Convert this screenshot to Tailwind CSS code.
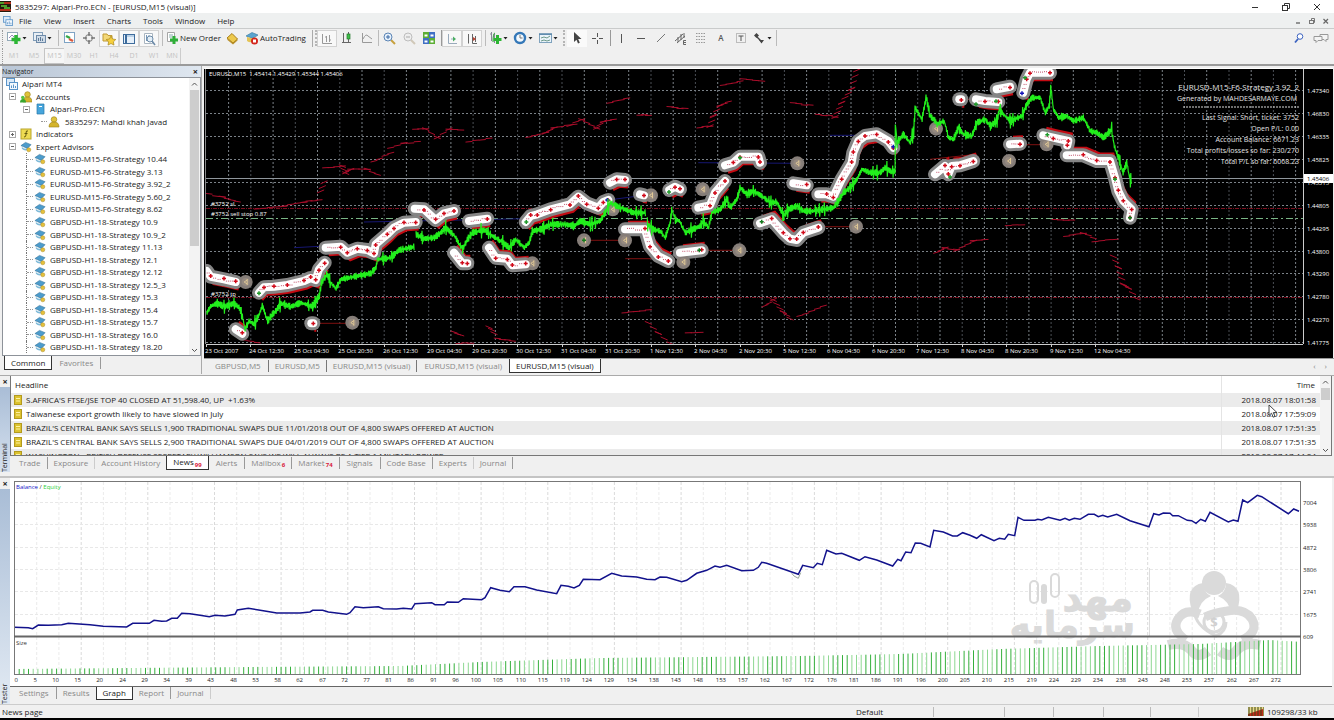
<!DOCTYPE html>
<html lang="en">
  <head>
    <meta charset="UTF-8" />
    <meta name="viewport" content="width=device-width, initial-scale=1.0" />
    <script src="https://cdn.jsdelivr.net/npm/@tailwindcss/browser@4"></script>
    <title>5835297: Alpari-Pro.ECN - [EURUSD,M15 (visual)]</title>
  </head>
  <body class="bg-[#f0f0f0] font-['Open_Sans','Noto_Sans',sans-serif] text-[8px] leading-[12px] text-[#222] overflow-x-hidden">
    <!-- shared icons -->
    <svg class="hidden">
      <symbol id="hat" viewBox="0 0 13 12">
        <path d="M1 4.500 6 1l6 2.500-4 4z" fill="#4d9ccc" stroke="#2f6f96" stroke-width=".6" />
        <path d="M2 6q3 3 6 1l1 2q-4 2-7-1z" fill="#7db9d8" />
        <circle cx="9.500" cy="9" r="2.200" fill="#e5c13c" stroke="#a8841c" stroke-width=".5" />
      </symbol>
      <symbol id="person" viewBox="0 0 12 12">
        <circle cx="6" cy="3.500" r="2.800" fill="#e0c33a" stroke="#9a7f16" stroke-width=".6" />
        <path d="M1 11q0-5 5-5t5 5z" fill="#d4b42c" stroke="#9a7f16" stroke-width=".6" />
      </symbol>
      <symbol id="people" viewBox="0 0 12 12">
        <circle cx="7.500" cy="3.500" r="2.800" fill="#e0c33a" stroke="#9a7f16" stroke-width=".6" />
        <path d="M3 11q0-5 4.500-5t4.500 5z" fill="#d4b42c" stroke="#9a7f16" stroke-width=".6" />
        <circle cx="2.800" cy="6.500" r="1.800" fill="#57c443" />
        <path d="M0 11.500q0-3.500 3-3.500t3 3.500z" fill="#39a62e" />
      </symbol>
      <symbol id="note" viewBox="0 0 8 10">
        <rect x=".5" y=".5" width="7" height="9" fill="#dcc22f" stroke="#b39a1d" />
        <path d="M2 3.500h4M2 6h4" stroke="#fff3a0" />
      </symbol>
      <symbol id="windows" viewBox="0 0 12 12">
        <rect x=".5" y=".5" width="8" height="7" fill="#dbeaf8" stroke="#5b94c8" />
        <rect x="3.500" y="4.500" width="8" height="7" fill="#f4f9fe" stroke="#5b94c8" />
        <path d="M5.500 10V7.500M7.500 10V6.500M9.500 10V8" stroke="#5b94c8" />
      </symbol>
      <symbol id="dd" viewBox="0 0 5 4"><path d="M.5 1h4L2.500 3.500z" fill="#222" /></symbol>
    </svg>

    <header class="flex h-[13px] items-center bg-white">
      <svg class="w-[11px] h-[11px]" viewBox="0 0 11 11"><rect width="11" height="11" fill="#241a0c" /><path d="M0 2h5M1 5h6M4 7h6" stroke="#4e9e2a" stroke-width="2" /><path d="M4 2h7M0 9h11" stroke="#b3301b" stroke-width="2" /></svg>
      <h1 class="ml-1 grow">5835297: Alpari-Pro.ECN - [EURUSD,M15 (visual)]</h1>
      <button aria-label="Minimize" class="w-[31px] grid place-items-center"><svg class="w-2 h-2" viewBox="0 0 8 8"><path d="M1 4.500h6" stroke="#333" /></svg></button>
      <button aria-label="Restore" class="w-[31px] grid place-items-center"><svg class="w-2 h-2" viewBox="0 0 8 8" fill="none" stroke="#333"><rect x=".5" y="2.500" width="5" height="5" /><path d="M2.500 2V.5h5v5H6" /></svg></button>
      <button aria-label="Close" class="w-[31px] grid place-items-center"><svg class="w-2 h-2" viewBox="0 0 8 8"><path d="m1 1 6 6m0-6L1 7" stroke="#333" /></svg></button>
      <span class="w-[2px]"></span>
    </header>

    <nav class="flex h-[15px] items-center gap-3 bg-[#eef0f0] pl-[3px]">
      <svg class="w-[10px] h-[10px] -mr-1.5"><use href="#windows" /></svg>
      <button>File</button><button>View</button><button>Insert</button><button>Charts</button><button>Tools</button><button>Window</button><button>Help</button>
      <span class="ml-auto flex gap-[6px] pr-1 text-[#666]">
        <button aria-label="Minimize chart"><svg class="w-2 h-2" viewBox="0 0 8 8"><path d="M2 6h4" stroke="#555" stroke-width="1.200" /></svg></button>
        <button aria-label="Restore chart"><svg class="w-2 h-2" viewBox="0 0 8 8" fill="none" stroke="#777"><rect x="1.500" y="3.500" width="4" height="3" /><path d="M3.500 3V1.500h3v4H6" /></svg></button>
        <button aria-label="Close chart"><svg class="w-2 h-2" viewBox="0 0 8 8"><path d="m1.500 2 4.500 4.500M6 2 1.500 6.500" stroke="#666" stroke-width="1.200" /></svg></button>
      </span>
    </nav>

    <!-- main toolbar -->
    <div class="flex h-[19px] items-center border-t border-[#c9cbcb] bg-[#f0f0f0]">
      <span class="w-[2px] ml-[2px] mr-px h-4 border-l border-dotted border-[#999]"></span>
      <button aria-label="New chart" class="flex w-[25px] items-center pl-px"><svg class="w-4 h-4" viewBox="0 0 16 16"><rect x="1.500" y="2.500" width="10" height="8" fill="#fff" stroke="#93a9b8" /><path d="M3 8l3-3 2 2" fill="none" stroke="#98b" /><path d="M10 5v9M5.500 9.500h9" stroke="#2db534" stroke-width="3.500" /></svg><svg class="w-[5px] h-1"><use href="#dd" /></svg></button>
      <button aria-label="Profiles" class="flex w-[25px] items-center pl-px"><svg class="w-4 h-4" viewBox="0 0 16 16"><rect x="2.500" y="2.500" width="9" height="8" fill="#e8eef4" stroke="#7f9cb8" /><rect x="5.500" y="5.500" width="9" height="7" fill="#cfdbe7" stroke="#6e8aa8" /><path d="M7.500 11V8M9.500 11V7M11.500 11V8.500" stroke="#5c7896" /></svg><svg class="w-[5px] h-1"><use href="#dd" /></svg></button>
      <span class="w-1 h-4 border-r border-[#bbb]"></span>
      <button aria-label="Market Watch" class="grid w-5 place-items-center"><svg class="w-4 h-4" viewBox="0 0 16 16"><rect x="3.500" y="2.500" width="10" height="10" fill="#fff" stroke="#7ea3c4" /><path d="m5 6 4 2" stroke="#35a94a" stroke-width="2.500" /><path d="m8 9 4 2" stroke="#d95a3d" stroke-width="2.500" /></svg></button>
      <button aria-label="Data Window" class="grid w-5 place-items-center"><svg class="w-4 h-4" viewBox="0 0 16 16" fill="none" stroke="#777"><circle cx="8" cy="8" r="3.500" /><path d="M8 2v4M8 10v4M2 8h4M10 8h4" stroke-width="1.500" /></svg></button>
      <button aria-label="Navigator" class="grid h-[17px] w-5 place-items-center border border-[#d2d2d2] bg-[#f8f8f8]"><svg class="w-4 h-4" viewBox="0 0 16 16"><path d="M2 3h4l1 1.500h4V10H2z" fill="#f3d878" stroke="#c09a35" /><path d="m10 5 1.500 3 3.300.5-2.400 2.300.6 3.300-3-1.600-3 1.600.6-3.300L5.200 8.500 8.500 8z" fill="#f6cf3c" stroke="#a8861e" stroke-width=".7" /></svg></button>
      <button aria-label="Terminal" class="grid h-[17px] w-5 place-items-center border border-[#d2d2d2] bg-[#f8f8f8]"><svg class="w-4 h-4" viewBox="0 0 16 16"><rect x="2.500" y="3.500" width="11" height="9" fill="#e6f0fa" stroke="#3e6c9c" /><path d="M5 4v8" stroke="#3e6c9c" stroke-width="2" /><path d="M6 5h7" stroke="#8fb1d2" /></svg></button>
      <button aria-label="Strategy Tester" class="grid h-[17px] w-5 place-items-center border border-[#d2d2d2] bg-[#f8f8f8]"><svg class="w-4 h-4" viewBox="0 0 16 16"><path d="M3.500 2.500h8v10h-8z" fill="#fff" stroke="#a9b5c0" /><path d="M5.500 4v6M8 4v4" stroke="#79b" /><circle cx="9" cy="8" r="3" fill="#e3eef7" stroke="#6d8ba8" /><path d="m11 10 3 4" stroke="#6d8ba8" stroke-width="1.500" /></svg></button>
      <span class="w-1 h-4 border-r border-[#bbb]"></span>
      <button class="flex w-[59px] items-center gap-px whitespace-nowrap pl-[2px]"><svg class="w-[14px] h-4 shrink-0" viewBox="0 0 14 16"><path d="M2.500 2.500h7v9h-7z" fill="#fff" stroke="#a5a5a5" /><path d="M4 5h4M4 7h4" stroke="#8aa" /><path d="M9 6v8M5 10h8" stroke="#2fae38" stroke-width="3" /></svg>New Order</button>
      <button aria-label="MetaEditor" class="grid w-5 place-items-center"><svg class="w-4 h-4" viewBox="0 0 16 16"><path d="m3 8 5-4.500L13.500 9 9 13z" fill="#edc94c" stroke="#a87f1b" /><path d="m3 8 .5 2L9 14.500l4.500-4V9L9 13z" fill="#b98f28" /></svg></button>
      <button class="flex w-[67px] items-center gap-px whitespace-nowrap pl-[3px]"><svg class="w-[14px] h-4 shrink-0" viewBox="0 0 14 16"><path d="m1 6 6-3.500L13 5 8 8.500z" fill="#5aa4cf" stroke="#33769e" stroke-width=".6" /><path d="M2 7v4q4 3 8-1V7L8 8.500z" fill="#e4c456" /><circle cx="9.500" cy="11" r="3.500" fill="#d3261d" /><rect x="8" y="9.500" width="3" height="3" fill="#fff" /></svg>AutoTrading</button>
      <span class="w-1 h-[17px] border-r border-[#aaa]"></span>
      <span class="w-1 h-4 border-r-2 border-dotted border-[#b5b5b5]"></span>
      <button aria-label="Bar Chart" class="grid h-[17px] w-5 place-items-center border border-[#d2d2d2] bg-[#f8f8f8]"><svg class="w-4 h-4" viewBox="0 0 16 16"><path d="M3.500 3v9.500H13M7.500 5v6M10.500 4v7M6 6h1.500M10.500 9H12" fill="none" stroke="#999" /></svg></button>
      <button aria-label="Candlesticks" class="grid w-5 place-items-center"><svg class="w-4 h-4" viewBox="0 0 16 16"><path d="M4.500 3v10M9.500 2v10M3 12.500h9" stroke="#666" /><rect x="8" y="4" width="3" height="5" fill="#3fc04a" stroke="#247a2c" stroke-width=".7" /></svg></button>
      <button aria-label="Line Chart" class="grid w-5 place-items-center"><svg class="w-4 h-4" viewBox="0 0 16 16"><path d="M3.500 3v9.500H13M4 9q3-6 5-3l4 3" fill="none" stroke="#999" /></svg></button>
      <span class="w-[2px] h-4 border-r border-[#bbb]"></span>
      <button aria-label="Zoom In" class="grid w-5 place-items-center"><svg class="w-4 h-4" viewBox="0 0 16 16"><path d="m10 10 4 4" stroke="#c6a03e" stroke-width="2" /><circle cx="7" cy="7" r="4" fill="#e5f0fb" stroke="#5b84b4" /><path d="M7 5v4M5 7h4" stroke="#3b69a4" /></svg></button>
      <button aria-label="Zoom Out" class="grid w-5 place-items-center"><svg class="w-4 h-4" viewBox="0 0 16 16"><path d="m10 10 4 4" stroke="#d0c8b8" stroke-width="2" /><circle cx="7" cy="7" r="4" fill="#eee" stroke="#bdbdbd" /><path d="M5 7h4" stroke="#aaa" /></svg></button>
      <button aria-label="Tile Windows" class="grid w-5 place-items-center"><svg class="w-4 h-4" viewBox="0 0 16 16"><rect x="2" y="2" width="6" height="6" fill="#5cae35" /><rect x="8" y="2" width="6" height="6" fill="#3f6fc4" /><rect x="2" y="8" width="6" height="6" fill="#3f6fc4" /><rect x="8" y="8" width="6" height="6" fill="#5cae35" /><path d="M3.500 5.500h3M9.500 5.500h3M3.500 11.500h3M9.500 11.500h3" stroke="#fff" stroke-width="2" /></svg></button>
      <span class="w-[3px] h-4 border-r border-[#999]"></span>
      <button aria-label="Auto Scroll" class="grid h-[17px] w-5 place-items-center border border-[#d2d2d2] bg-[#f8f8f8]"><svg class="w-4 h-4" viewBox="0 0 16 16"><path d="M4.500 3v9.500H13M7 8h3" fill="none" stroke="#9ab" /><path d="m9 5.500 3 2.500-3 2.500z" fill="#4bae63" /></svg></button>
      <button aria-label="Chart Shift" class="grid h-[17px] w-5 place-items-center border border-[#d2d2d2] bg-[#f8f8f8]"><svg class="w-4 h-4" viewBox="0 0 16 16"><path d="M4.500 3v9.500M8.500 3v9.500H13M11.500 5v6" fill="none" stroke="#666" /><path d="m9 6 3 2-3 2z" fill="#b43" /></svg></button>
      <span class="w-1 h-4 border-r border-[#bbb]"></span>
      <button aria-label="Indicators" class="flex w-[25px] items-center pl-px"><svg class="w-4 h-4" viewBox="0 0 16 16"><path d="M4.500 2v9M7.500 4v9M3 4h1.500" stroke="#889" /><path d="M8 3q-2 0-2 9" fill="none" stroke="#2b9b36" /><path d="M10.500 5v9M6.500 9.500h8" stroke="#2db534" stroke-width="3" /></svg><svg class="w-[5px] h-1"><use href="#dd" /></svg></button>
      <button aria-label="Periods" class="flex w-[25px] items-center pl-px"><svg class="w-4 h-4" viewBox="0 0 16 16"><circle cx="8" cy="8" r="5" fill="#f4f9fd" stroke="#3478b8" stroke-width="2.400" /><path d="M8 5v3h2.500" fill="none" stroke="#777" /></svg><svg class="w-[5px] h-1"><use href="#dd" /></svg></button>
      <button aria-label="Templates" class="flex w-[25px] items-center pl-px"><svg class="w-4 h-4" viewBox="0 0 16 16"><rect x="2.500" y="3.500" width="12" height="9" fill="#e9f3fa" stroke="#7fa2bd" /><path d="M2 4.500h13" stroke="#5f8cae" /><path d="m4 8 3-1 3 1 3-2M4 11l3-1 3 1 3-1" fill="none" stroke="#6e9a8a" /></svg><svg class="w-[5px] h-1"><use href="#dd" /></svg></button>
      <span class="w-1 mr-[2px] h-4 border-r-2 border-dotted border-[#b5b5b5]"></span>
      <button aria-label="Cursor" class="grid h-[17px] w-5 place-items-center bg-[#fafafa]"><svg class="w-4 h-4" viewBox="0 0 16 16"><path d="M5 2v10l2.500-2.200L9 13.500l1.800-.8L9.200 9H12.500z" fill="#444" /></svg></button>
      <button aria-label="Crosshair" class="grid w-5 place-items-center"><svg class="w-4 h-4" viewBox="0 0 16 16"><path d="M8.500 3v4M8.500 10v4M3 8.500h4M10 8.500h4" stroke="#555" /></svg></button>
      <span class="w-1 h-4 border-r border-[#999]"></span>
      <button aria-label="Vertical Line" class="grid w-5 place-items-center"><svg class="w-4 h-4" viewBox="0 0 16 16"><path d="M8.500 4v9" stroke="#555" /></svg></button>
      <button aria-label="Horizontal Line" class="grid w-5 place-items-center"><svg class="w-4 h-4" viewBox="0 0 16 16"><path d="M4 8.500h8" stroke="#555" /></svg></button>
      <button aria-label="Trendline" class="grid w-5 place-items-center"><svg class="w-4 h-4" viewBox="0 0 16 16"><path d="m4 12 8-8" stroke="#777" /></svg></button>
      <button aria-label="Equidistant Channel" class="grid w-5 place-items-center"><svg class="w-4 h-4" viewBox="0 0 16 16"><path d="m2 11 8-7M4 13l8-7M5 7v5M8 4v6M11 3v5M10.500 14.500v-4H13M10.500 12.500H13M10.500 14.500H13" fill="none" stroke="#666" /></svg></button>
      <button aria-label="Fibonacci" class="grid w-5 place-items-center"><svg class="w-4 h-4" viewBox="0 0 16 16"><path d="M3 3.500h9M3 6.500h9M3 9.500h9M3 12.500h9" stroke="#999" stroke-dasharray="1.500 1" /></svg></button>
      <button aria-label="Text" class="w-5 text-center text-[#555] font-semibold">A</button>
      <button aria-label="Text Label" class="grid w-5 place-items-center"><svg class="w-4 h-4" viewBox="0 0 16 16"><rect x="3.500" y="3.500" width="9" height="9" fill="none" stroke="#888" stroke-dasharray="1 1" /><path d="M5.500 6h5M8 6v5" stroke="#555" /></svg></button>
      <button aria-label="Arrows" class="flex w-[25px] items-center"><svg class="w-4 h-4" viewBox="0 0 16 16"><path d="M3 5.500 5.500 3 8 5.500 5.500 8zM8 10h5l-2.500 3.500z" fill="#444" /><path d="m6 7 4 4" stroke="#444" stroke-width="1.500" /></svg><svg class="w-[5px] h-1"><use href="#dd" /></svg></button>
      <span class="w-px h-4 bg-[#bbb]"></span>
      <button aria-label="Search" class="ml-auto mr-[8px]"><svg class="w-3 h-3" viewBox="0 0 12 12"><path d="M5 7 2 10.500" stroke="#3b62c0" stroke-width="1.800" /><circle cx="7" cy="4.500" r="2.800" fill="#fff" stroke="#3b62c0" /></svg></button>
      <button aria-label="Chat" class="mr-[5px]"><svg class="w-4 h-3" viewBox="0 0 16 12" fill="#f4f4f4" stroke="#999"><path d="M7 2.500h8v5h-2v2l-2-2H7z" /><path d="M1 4.500h8v4H5l-2 2v-2H1z" /></svg></button>
    </div>

    <!-- timeframes -->
    <div class="flex h-[19px] items-center border-b-2 border-[#9a9a9a] text-[7px] text-[#c2c2c2] [text-shadow:1px_1px_#fff]">
      <span class="w-[2px] ml-[2px] h-4 border-l border-dotted border-[#999]"></span>
      <button class="w-5">M1</button><button class="w-5">M5</button><button class="w-5 h-4 border border-r-0 border-[#c4c4c4] bg-[#f6f6f6]">M15</button><button class="w-5">M30</button><button class="w-5">H1</button><button class="w-5">H4</button><button class="w-5">D1</button><button class="w-5">W1</button><button class="w-4">MN</button>
      <span class="w-px h-4 bg-[#ccc]"></span>
    </div>

    <main class="flex gap-[2px]">
      <!-- navigator -->
      <aside class="flex w-[202px] shrink-0 flex-col border-r border-[#aaa] pl-[2px]">
        <div class="flex h-[11px] items-center justify-between bg-linear-to-r from-[#b9c6d6] to-[#dfe7f0] pr-[3px] text-[7px]">
          <h2>Navigator</h2><button aria-label="Close Navigator" class="text-[9px] font-bold">×</button>
        </div>
        <div class="flex h-0 grow overflow-hidden border border-[#8d9299] bg-white">
          <ul id="tree" class="relative grid h-[288px] grow auto-rows-fr whitespace-nowrap"></ul>
          <div class="flex w-[11px] flex-col items-center bg-[#f3f3f3]">
            <svg class="my-[2px] w-[7px] h-2" viewBox="0 0 7 8"><path d="m1 5.500 2.500-2.500L6 5.500" fill="none" stroke="#555" /></svg>
            <div class="h-[156px] w-[9px] bg-[#cdcdcd]"></div>
            <svg class="mt-auto mb-px w-[7px] h-2" viewBox="0 0 7 8"><path d="m1 3 2.500 2.500L6 3" fill="none" stroke="#555" /></svg>
          </div>
        </div>
        <div class="flex h-[18px] items-start pl-[2px] text-[#888]">
          <button class="h-[14px] border border-t-0 border-[#333] bg-white px-[6px] text-[#222]">Common</button>
          <button class="mt-px px-[7px] h-3 border-r border-[#999]">Favorites</button>
        </div>
      </aside>

      <section class="grow">
        <svg id="price" class="block h-auto w-full" viewBox="204 66 1130 292" font-family="Open Sans, sans-serif"></svg>
        <div class="flex h-4 items-start border-t border-[#999] pt-px text-[#888]">
          <button class="ml-[4px] h-3 border-r border-[#777] px-[7px]">GBPUSD,M5</button>
          <button class="h-3 border-r border-[#777] px-[6px]">EURUSD,M5</button>
          <button class="h-3 border-r border-[#777] px-[6px]">EURUSD,M15 (visual)</button>
          <button class="h-3 px-[7px]">EURUSD,M15 (visual)</button>
          <button class="-mt-px h-[14px] border border-t-0 border-[#333] bg-white px-[6px] text-[#222]">EURUSD,M15 (visual)</button>
          <button aria-label="Scroll tabs left" class="ml-auto mr-[9px]">‹</button><button aria-label="Scroll tabs right" class="mr-[7px]">›</button>
        </div>
      </section>
    </main>

    <!-- terminal -->
    <section class="relative mt-px flex h-[97px] border-t border-[#aaa]">
      <div class="flex w-[10px] flex-col items-center bg-[#f0f0f0]">
        <button aria-label="Close Terminal" class="h-[11px] text-[9px] leading-[8px] font-bold">×</button>
        <div class="flex grow items-center bg-linear-to-b from-[#d5e0ee] to-[#a9bdd6] [writing-mode:vertical-rl] rotate-180 w-[10px] text-[7px]"><h2>Terminal</h2></div>
      </div>
      <div class="flex min-w-0 grow flex-col pr-[2px]">
        <div class="flex h-[80px] overflow-hidden border border-t-0 border-[#777] bg-white">
          <table class="grow border-collapse self-start">
            <thead><tr class="h-[17px]"><th class="pl-1 text-left font-normal">Headline</th><th class="w-[99px] border-l border-[#e4e4e4] pr-[5px] text-right font-normal">Time</th></tr></thead>
            <tbody id="news"></tbody>
          </table>
          <div class="flex w-[11px] flex-col items-center bg-[#f3f3f3]">
            <svg class="my-[2px] w-[7px] h-2" viewBox="0 0 7 8"><path d="m1 5.500 2.500-2.500L6 5.500" fill="none" stroke="#555" /></svg>
            <div class="h-[12px] w-[9px] bg-[#cdcdcd]"></div>
            <svg class="mt-auto mb-px w-[7px] h-2" viewBox="0 0 7 8"><path d="m1 3 2.500 2.500L6 3" fill="none" stroke="#555" /></svg>
          </div>
        </div>
        <div class="flex h-[16px] items-start pl-[3px] text-[#888]">
          <button class="mt-px h-3 border-r border-[#999] px-[6px]">Trade</button>
          <button class="mt-px h-3 border-r border-[#ccc] px-[6px]">Exposure</button>
          <button class="mt-px h-3 px-[6px]">Account History</button>
          <button class="flex h-[14px] gap-px border border-t-0 border-[#333] bg-white px-[6px] text-[#222]">News<span class="mt-[3px] text-[6px] font-bold text-[#d8203c]">99</span></button>
          <button class="mt-px h-3 border-r border-[#999] px-[7px]">Alerts</button>
          <button class="mt-px flex h-3 gap-px border-r border-[#999] px-[6px]">Mailbox<span class="mt-[2px] text-[6px] font-bold text-[#d8203c]">6</span></button>
          <button class="mt-px flex h-3 gap-px border-r border-[#999] px-[6px]">Market<span class="mt-[2px] text-[6px] font-bold text-[#d8203c]">74</span></button>
          <button class="mt-px h-3 border-r border-[#999] px-[7px]">Signals</button>
          <button class="mt-px h-3 border-r border-[#999] px-[6px]">Code Base</button>
          <button class="mt-px h-3 border-r border-[#ccc] px-[6px]">Experts</button>
          <button class="mt-px h-3 border-r border-[#999] px-[6px]">Journal</button>
        </div>
      </div>
      <!-- mouse pointer -->
      <svg class="absolute right-[56px] top-[28px] w-[10px] h-[14px]" viewBox="0 0 10 14"><path d="M1 1v10.500l2.500-2.300 1.700 4 1.800-.8-1.700-3.800H9z" fill="#fff" stroke="#333" stroke-width=".9" /></svg>
    </section>

    <!-- tester -->
    <section class="mt-1 flex border-t-2 border-[#c4c4c4]">
      <div class="flex w-[10px] flex-col items-center">
        <button aria-label="Close Tester" class="h-[11px] text-[9px] leading-[8px] font-bold">×</button>
        <div class="flex grow items-center bg-linear-to-b from-[#e2eaf3] to-[#a9bdd6] [writing-mode:vertical-rl] rotate-180 w-[10px] text-[7px]"><h2 class="pb-1">Tester</h2></div>
      </div>
      <div class="grow pr-[2px]">
        <svg id="equity" class="block h-auto w-full border-b border-[#666] bg-white" viewBox="10 478 1322 208" font-family="Open Sans, sans-serif"></svg>
        <div class="flex h-[17px] items-start pl-[2px] text-[#888]">
          <button class="h-3 border-r border-[#999] px-[7px]">Settings</button>
          <button class="h-3 px-[6px]">Results</button>
          <button class="h-[13px] border border-t-0 border-[#333] bg-white px-[6px] text-[#222]">Graph</button>
          <button class="h-3 border-r border-[#999] px-[6px]">Report</button>
          <button class="h-3 border-r border-[#ccc] px-[6px]">Journal</button>
        </div>
      </div>
    </section>

    <footer class="flex h-[17px] items-center border-t border-b-3 border-t-[#ccc] border-b-black pl-[2px]">
      <span class="grow">News page</span>
      <span class="w-[77px]">Default</span>
      <span class="h-[10px] w-[71px] border-l border-[#bbb]"></span>
      <span class="h-[10px] w-[49px] border-l border-[#bbb]"></span>
      <span class="h-[10px] w-[50px] border-l border-[#bbb]"></span>
      <span class="h-[10px] w-[47px] border-l border-[#bbb]"></span>
      <span class="h-[10px] w-[48px] border-l border-[#bbb]"></span>
      <span class="h-[10px] w-[50px] border-l border-[#ccc]"></span>
      <svg class="w-4 h-[9px]" viewBox="0 0 16 9"><rect width="16" height="9" fill="#e8d98a" /><path d="M0 9V7l15-5v7z" fill="#c22a1a" /><path d="M1 0v9M4 0v9M7 0v9M10 0v9M13 0v9M16 0v9" stroke="#3d4416" /></svg>
      <span class="ml-[3px] w-[67px]">109298/33 kb</span>
    </footer>

    <script>
      // navigator tree
      const eas = ["EURUSD-M15-F6-Strategy 10.44", "EURUSD-M15-F6-Strategy 3.13", "EURUSD-M15-F6-Strategy 3.92_2", "EURUSD-M15-F6-Strategy 5.60_2", "EURUSD-M15-F6-Strategy 8.62"]
        .concat(["10.9", "10.9_2", "11.13", "12.1", "12.12", "12.5_3", "15.3", "15.4", "15.7", "16.0", "18.20"].map((n) => "GBPUSD-H1-18-Strategy " + n));
      const box = (plus) => `<svg class="w-[7px] h-[7px] mr-1 shrink-0" viewBox="0 0 7 7"><rect x=".5" y=".5" width="6" height="6" fill="#fff" stroke="#aaa"/><path d="M2 3.500h3${plus ? "M3.500 2v3" : ""}" stroke="#666"/></svg>`;
      const use = (id) => `<svg class="w-3 h-3 mr-1 shrink-0"><use href="#${id}"/></svg>`;
      const book = `<svg class="w-3 h-3 mr-1 shrink-0" viewBox="0 0 12 12"><path d="M3 1h7v10H3z" fill="#46a5dc" stroke="#2a79ab" stroke-width=".7"/><path d="M5 3.500h3" stroke="#fff"/></svg>`;
      const fx = `<svg class="w-3 h-3 mr-1 shrink-0" viewBox="0 0 12 12"><rect x="1" y="1" width="10" height="10" fill="#eedb52" stroke="#b9a52c"/><path d="M8 3q-2-1-2 2v2q0 2-2 2M4.500 5.500h3" fill="none" stroke="#665b10"/></svg>`;
      const dash = `<span class="w-[6px] mr-px border-t border-dotted border-[#999]"></span>`;
      document.getElementById("tree").innerHTML =
        `<li class="flex items-center pl-[3px]">${use("windows")}Alpari MT4</li>` +
        `<li class="flex items-center pl-[6px]">${box()}${use("people")}Accounts</li>` +
        `<li class="flex items-center pl-[20px]">${box()}${book}Alpari-Pro.ECN</li>` +
        `<li class="flex items-center pl-[38px]">${dash}${use("person")}<span class="ml-px">5835297: Mahdi khah Javad</span></li>` +
        `<li class="flex items-center pl-[6px]">${box(1)}${fx}Indicators</li>` +
        `<li class="flex items-center pl-[6px]">${box()}${use("hat")}Expert Advisors</li>` +
        eas.map((t) => `<li class="ml-[23px] flex items-center border-l border-dotted border-[#777]">${dash}${use("hat")}${t}</li>`).join("") +
        `<li class="flex items-center pl-[31px]">${use("hat")}</li>`;

      // news
      const news = [
        ["S.AFRICA'S FTSE/JSE TOP 40 CLOSED AT 51,598.40, UP&nbsp; +1.63%", "18:01:58"],
        ["Taiwanese export growth likely to have slowed in July", "17:59:09"],
        ["BRAZIL'S CENTRAL BANK SAYS SELLS 1,900 TRADITIONAL SWAPS DUE 11/01/2018 OUT OF 4,800 SWAPS OFFERED AT AUCTION", "17:51:35"],
        ["BRAZIL'S CENTRAL BANK SAYS SELLS 2,900 TRADITIONAL SWAPS DUE 04/01/2019 OUT OF 4,800 SWAPS OFFERED AT AUCTION", "17:51:35"],
        ["WASHINGTON - BRITISH DEFENSE SECRETARY WILLIAMSON SAYS WE WILL ALWAYS BE A TIER 1 MILITARY POWER", "17:44:04"],
      ];
      document.getElementById("news").innerHTML = news
        .map(([t, h]) => `<tr class="h-[14px] odd:bg-[#ebebeb]"><td class="pl-[3px]"><span class="flex items-center gap-1"><svg class="w-2 h-[10px]"><use href="#note"/></svg>${t}</span></td><td class="border-l border-[#e4e4e4] pr-1 text-right">2018.08.07 ${h}</td></tr>`)
        .join("");

      // points are kept in thirds of a pixel, relative to x0,y0
      const P = (x0, y0, s) => s.split(" ").map((p) => p.split(",").map(Number)).map(([x, y]) => [x0 + x / 3, y0 + y / 3]);
      const D = (a) => "M" + a.map((p) => p[0].toFixed(1) + " " + p[1].toFixed(1)).join("L");
      let seed = 7;
      const rnd = () => (seed = (seed * 16807) % 2147483647) / 2147483647;
      const line = (x1, y1, x2, y2, st, extra = "") => `<path d="M${x1} ${y1}L${x2} ${y2}" stroke="${st}" ${extra}/>`;
      const text = (x, y, t, size, fill, extra = "") => `<text x="${x}" y="${y}" font-size="${size}" fill="${fill}" ${extra}>${t}</text>`;

      // price chart
      const A = 204, B = 570, C = 930;
      let s = `<clipPath id="plot"><rect x="206" y="69" width="1097" height="275"/></clipPath><rect x="204" y="66" width="1130" height="292" fill="#f0f0f0"/><rect x="204" y="69" width="1129" height="289" fill="#000"/>`;
      for (let i = 0; i < 49; i++) s += line((228.6 + i * 22.23).toFixed(1), 70, (228.6 + i * 22.23).toFixed(1), 344, i % 2 ? "#4a4f55" : "#7b8288", 'stroke-dasharray="2 2"');
      const prices = ["1.47340", "1.46830", "1.46335", "1.45825", "1.45315", "1.44805", "1.44295", "1.43800", "1.43290", "1.42780", "1.42270", "1.41775"];
      prices.forEach((p, i) => {
        const y = Math.round(90 + i * 22.93) + 0.5;
        s += line(206, y, 1306, y, "#7b8288", 'stroke-dasharray="2 2"') + text(1307, y + 2, p, 6, "#fff");
      });
      s += line(206, 208.5, 1303, 208.5, "#7c1020", 'stroke-dasharray="4 1 1 1"') + line(206, 297.5, 1303, 297.5, "#7c1020", 'stroke-dasharray="4 1 1 1"');
      s += line(206, 178.5, 1303, 178.5, "#8f969c") + line(206, 218.5, 1303, 218.5, "#79b585", 'stroke-dasharray="7 3 2 3"');
      s += line(206, 344.5, 1303, 344.5, "#ccc") + line(1303.5, 69, 1303.5, 344, "#ccc") + line(205.5, 69, 205.5, 344, "#888") + line(205, 68.5, 1333, 68.5, "#fff");
      ["23 Oct 2007", "24 Oct 12:30", "25 Oct 04:30", "25 Oct 20:30", "26 Oct 12:30", "29 Oct 04:30", "29 Oct 20:30", "30 Oct 12:30", "31 Oct 04:30", "31 Oct 20:30", "1 Nov 12:30", "2 Nov 04:30", "2 Nov 20:30", "5 Nov 12:30", "6 Nov 04:30", "6 Nov 20:30", "7 Nov 12:30", "8 Nov 04:30", "8 Nov 20:30", "9 Nov 12:30", "12 Nov 04:30"]
        .forEach((t, i) => (s += text(Math.round(205 + i * 44.46), 353, t, 6, "#fff") + line(206.5 + Math.round(i * 44.46), 344, 206.5 + Math.round(i * 44.46), 347, "#ccc")));

      s += `<g clip-path="url(#plot)">`;
      // stop and target levels
      const red = [
        [A, "15,385 55,393 100,407"], [A, "160,428 240,420 300,408 345,402"], [A, "350,375 360,350"], [A, "365,305 415,300 425,320 440,310 490,310 520,325"], [A, "510,285 560,262"],
        [A, "560,245 600,232 640,228"], [A, "635,190 665,188 700,215 735,190 770,192"], [A, "795,227 855,217"], [A, "975,212 1025,200 1050,185 1110,175"], [A, "120,822 160,830"], [A, "750,797 770,808"], [A, "765,832 800,832"], [A, "855,785 870,800"], [A, "880,818 925,825"],
        [B, "0,178 35,160 80,185 100,168 130,162"], [B, "120,110 170,97"], [B, "210,147 235,147"], [B, "300,123 345,128"], [B, "390,185 420,180 430,150 450,118 475,108"], [B, "460,58 510,47"], [B, "520,38 575,45"], [B, "670,112 720,118"], [B, "745,145 795,152 815,110 845,68 860,12"],
        [B, "165,740 235,732"], [B, "235,770 265,802 300,830"], [B, "355,800 390,798"], [B, "585,720 610,702 640,738 660,758"], [B, "690,750 760,720"],
        [C, "235,478 275,476"], [C, "375,462 425,463"], [C, "410,510 460,502 490,515"], [C, "20,558 45,545 80,552 130,525 165,522"], [C, "495,528 555,520"], [C, "550,570 565,605 580,655 595,665 620,698"],
      ];
      red.forEach(([o, p]) => {
        const a = P(o, 66, p);
        for (let i = 1; i < a.length; i++) {
          const dx = a[i][0] - a[i - 1][0], dy = a[i][1] - a[i - 1][1], n = Math.max(2, Math.round(Math.hypot(dx, dy) / 6)), t = Math.max(-1.5, Math.min(1.5, dy / (dx || 1) * 2));
          for (let k = 0; k <= n; k++) {
            const x = a[i - 1][0] + (dx * k) / n, y = a[i - 1][1] + (dy * k) / n + rnd() - 0.5;
            s += line((x - 3.5).toFixed(1), (y - t).toFixed(1), (x + 3.5).toFixed(1), (y + t).toFixed(1), "#a80d2a");
          }
        }
      });
      [[A, "325,772 445,772"], [B, "42,523 165,523"], [B, "395,553 508,553"], [B, "745,482 858,482"], [C, "90,100 140,100"], [C, "270,236 330,236"], [B, "166,578 290,578"], [C, "0,280 140,265"]].forEach(([o, p]) => (s += `<path d="${D(P(o, 66, p))}" stroke="#7e1010"/>`));
      [[A, "270,545 365,540"], [A, "480,468 960,458"], [B, "115,402 222,388"], [B, "385,290 682,292"], [B, "780,208 880,208"]].forEach(([o, p]) => (s += `<path d="${D(P(o, 66, p))}" stroke="#161672" fill="none"/>`));

      // trade bands
      const bands = [
        [A, "8,615 20,632 60,640 95,648"], [A, "165,680 180,664 210,662 250,657 300,645 320,636 335,642 345,610 362,590"], [A, "365,545 410,542 430,560 460,548 490,552 510,562 515,535 550,505 570,485 600,470 635,468"],
        [A, "632,428 660,430 695,462 720,442 750,435"], [A, "795,465 850,458"], [A, "750,560 775,592 790,592"], [A, "855,545 875,575 910,578 925,598 965,595"],
        [A, "965,468 980,450 1000,445 1040,430 1098,415 1123,392 1148,412 1183,425 1198,408 1213,402"], [A, "95,790 115,803"], [A, "322,772 328,772"],
        [B, "120,350 140,340 165,342"], [B, "210,385 222,388"], [B, "298,372 315,362 330,370"], [B, "385,425 420,418 435,380 465,345"], [B, "465,298 490,290 510,272 565,272 570,290"],
        [B, "670,352 710,358"], [B, "745,385 770,385 790,392 815,340 845,290 850,260 865,225 885,210 920,205 955,225 970,245"], [B, "570,472 605,460 640,500 660,518 680,522 700,500 745,485"],
        [B, "165,490 225,490 240,540 265,570 295,585"], [B, "330,560 395,553"],
        [C, "15,325 45,300 55,325 65,300 90,298 130,285"], [C, "88,100 94,100"], [C, "138,100 165,105 205,108"], [C, "200,70 240,62"], [C, "280,80 290,40 300,20 360,20"],
        [C, "340,208 370,215 415,225 412,238"], [C, "240,235 270,233"], [C, "410,268 460,268 500,285 540,285 555,335 565,375 580,405 605,430 600,455"],
      ];
      // red trailing line hugging each band
      bands.forEach(([o, p]) => {
        const a = P(o, 66, p), up = /^(750,560|855,545|165,490|330,560|570,472|15,325|340,208|410,268|240,235|95,790)/.test(p);
        s += `<path d="${D(a.map(([x, y]) => [x + 3, y + (up ? -7 : 7)]))}" fill="none" stroke="#c40a12" stroke-width="3"/>`;
      });
      const dot = [[A, "125,648 985,592 445,770"], [B, "128,430 243,388 398,370 682,292 858,482 42,523 165,523 340,588 508,553 1098,188"], [C, "350,235 237,285"]];
      bands.forEach(([o, p]) => (s += `<path d="${D(P(o, 66, p))}" fill="none" stroke="#858585" stroke-width="14" stroke-linecap="round" stroke-linejoin="round"/>`));
      dot.forEach(([o, p]) => P(o, 66, p).forEach(([x, y]) => {
        s += `<circle cx="${x}" cy="${y}" r="7" fill="#857d78"/><circle cx="${x}" cy="${y}" r="4" fill="#968a80"/><path d="M${x + 1.5} ${y - 3}v6M${x + 1.5} ${y - 2}l-3 2 3 2" fill="none" stroke="#e0c896"/>`;
      }));
      bands.forEach(([o, p]) => {
        const a = P(o, 66, p);
        s += `<path d="${D(a)}" fill="none" stroke="#fff" stroke-width="8" stroke-linecap="round" stroke-linejoin="round"/>`;
        for (let i = 1; i < a.length; i++) {
          const n = Math.max(1, Math.round(Math.hypot(a[i][0] - a[i - 1][0], a[i][1] - a[i - 1][1]) / 4));
          for (let k = 1; k <= n; k++) {
            const x = (a[i - 1][0] + ((a[i][0] - a[i - 1][0]) * k) / n).toFixed(1), y = (a[i - 1][1] + ((a[i][1] - a[i - 1][1]) * k) / n + rnd() * 2 - 1).toFixed(1);
            s += k == n ? `<path d="M${x - 2} ${y}h4m-2-2v4" stroke="#d00a1a" stroke-width="1.500"/>` : `<path d="M${x - 2} ${y}h4" stroke="#c2506a" stroke-dasharray="1 1"/>`;
          }
        }
      });
      // open buy / close marks
      [[A, 165, 682, "#1f9a2a"], [A, 967, 468, "#1f9a2a"], [B, 112, 402, "#1414b8"], [B, 575, 467, "#157a1e"], [B, 388, 553, "#157a1e"], [B, 42, 523, "#157a1e"], [B, 970, 242, "#1414b8"], [B, 297, 378, "#1f9a2a"], [B, 510, 275, "#1f9a2a"], [C, 138, 115, "#1f9a2a"], [C, 198, 106, "#1f9a2a"], [C, 285, 35, "#1f9a2a"], [C, 276, 82, "#1414b8"], [C, 352, 206, "#1f9a2a"], [C, 60, 333, "#1f9a2a"], [C, 555, 340, "#1f9a2a"], [C, 600, 455, "#157a1e"]]
        .forEach(([o, x, y, c]) => (s += `<path d="M${(o + x / 3 - 2).toFixed(1)} ${(66 + y / 3).toFixed(1)}h4m-2-2v4" stroke="${c}" stroke-width="1.500"/>`));

      // price line
      const green = [
        [A, "8,740 20,720 40,712 60,722 90,712 105,725 115,750 122,790 135,765 150,775 165,745 175,718 190,765 205,745 215,735 230,712 260,722 290,710 325,722 345,690 352,650 368,625 380,650 395,668 410,640 450,632 500,622 515,605 520,580 540,578 560,575 585,552 632,542"],
        [A, "636,505 660,518 690,515 710,500 725,485 750,508 775,550 790,520 805,500 840,492 865,510 890,525 915,545 935,520 960,545 975,530 985,495 1010,490 1040,475 1080,475 1110,480 1128,465 1158,475 1188,465 1203,440 1218,410 1248,425 1288,440 1326,440"],
        [A, "1330,475 1348,490 1368,495 1383,515 1398,470 1403,430 1413,460 1426,465 1443,500 1488,480 1498,465 1513,485 1523,440 1548,430 1568,400 1578,425 1598,400 1608,365 1628,385 1648,375 1673,390 1698,410 1718,408 1738,450 1753,430 1778,420 1798,435 1828,435 1858,430 1888,425 1903,405 1918,380 1938,365 1958,340 1973,310 1998,320 2028,320 2043,305 2063,318 2072,315 2074,180 2078,230 2098,205 2118,230 2128,200 2133,125 2153,160 2166,95 2178,150 2198,170"],
        [C, "20,175 42,165 55,215 70,220 85,185 100,205 125,210 140,170 165,160 180,180 200,165 208,130 225,150 240,165 275,150 290,115 305,95 330,95 345,140 357,120 362,65 370,130 385,155 410,150 430,165 460,155 480,195 500,200 520,215 545,190 552,240 570,290 578,320 590,290 600,345 605,330"],
      ];
      green.forEach(([o, p]) => {
        const a = P(o, 66, p), out = [];
        for (let i = 1; i < a.length; i++) {
          const n = Math.max(1, Math.round(a[i][0] - a[i - 1][0]));
          for (let k = 0; k < n; k++) {
            const x = a[i - 1][0] + ((a[i][0] - a[i - 1][0]) * k) / n, y = a[i - 1][1] + ((a[i][1] - a[i - 1][1]) * k) / n, r = 1 + rnd() * (rnd() > 0.85 ? 7 : 2.5);
            out.push([x, y - r], [x + 0.4, y + r]);
          }
        }
        s += `<path d="${D(out)}" fill="none" stroke="#22ee1c" stroke-width="1.200"/>`;
      });
      s += "</g>";

      s += text(209, 76, "EURUSD,M15&#160; 1.45414 1.45429 1.45344 1.45406", 6, "#fff");
      s += text(211, 206, "#3752 sl", 6, "#fff") + text(211, 216, "#3752 sell stop 0.87", 6, "#fff") + text(211, 296, "#3752 tp", 6, "#fff");
      const R = 'text-anchor="end"';
      s += text(1299, 90, "EURUSD-M15-F6-Strategy 3.92_2", 8, "#e4e4e4", R) + text(1297, 101, "Generated by MAHDESARMAYE.COM", 7, "#e4e4e4", R) + line(1183, 107, 1299, 107, "#ddd", 'stroke-dasharray="2 1"');
      ["Last Signal: Short, ticket: 3752", "Open P/L: 0.00", "Account Balance: 6671.23", "Total profits/losses so far: 230/270", "Total P/L so far: 6068.23"].forEach((t, i) => (s += text(1299, 120 + i * 11, t, 7, "#e4e4e4", R)));
      s += `<rect x="1304" y="174" width="29" height="9" fill="#fff"/>` + text(1307, 181, "1.45406", 6, "#000") + `<rect x="204" y="358" width="1130" height="1" fill="#ddd"/>`;
      document.getElementById("price").innerHTML = s;

      // tester graph
      let g = "";
      for (let i = 1; i < 58; i++) g += line((14.5 + i * 22.22).toFixed(1), 482, (14.5 + i * 22.22).toFixed(1), 674, i % 3 ? "#ebebeb" : "#dadada", 'stroke-dasharray="3 2"');
      [7004, 5938, 4872, 3806, 2741, 1675, 609].forEach((v, i) => {
        const y = Math.round(502 + i * 22.3) + 0.5;
        g += (i < 6 ? line(15, y, 1300, y, "#e8e8e8", 'stroke-dasharray="3 2"') : "") + text(1303, y + 2, v, 6, "#222");
      });
      // broker logo
      g += `<g fill="#dadada" stroke="none"><circle cx="1214" cy="583" r="12"/><path d="M1192 611q-8-25 11-28 0 9 8 13-12 5-13 18zM1237 611q8-25-11-28 0 9-8 13 12 5 13 18z"/></g>
        <g fill="none" stroke="#dadada" stroke-width="9"><path d="M1186 640q-15-10-8-21 7-11 22-5M1242 640q17-8 10-21-7-11-25-8-14 2-22 6"/></g>
        <g fill="none" stroke="#dadada" stroke-width="10"><path d="M1168 645q16-4 24 6 6 8 16 0M1260 645q-16-4-24 6-6 8-16 0"/></g>
        <g fill="none" stroke="#dadada" stroke-width="3"><path d="M1194 610q1 16 22 26 10-4 10-14"/><circle cx="1214" cy="622" r="10"/></g>`;
      g += `<text x="1214" y="627" font-size="13" fill="#d0d0d0" text-anchor="middle" font-weight="bold">$</text>` + line(1149.5, 568, 1149.5, 636, "#ddd");
      g += `<g font-family="DejaVu Sans" font-weight="bold" fill="#dadada" stroke="#dadada" direction="rtl"><text x="1133" y="611" font-size="38">مهد</text><text x="1135" y="637" font-size="35">سرمایه</text></g>
        <g fill="none" stroke="#d9d9d9" stroke-width="2"><rect x="1030" y="581" width="8" height="22" rx="4"/><rect x="1051" y="574" width="8" height="23" rx="4"/></g><rect x="1041" y="584" width="6" height="20" rx="3" fill="#d9d9d9"/>`;
      // lot size bars
      const lots = [[14, 669], [250, 667], [400, 666], [480, 662], [600, 658], [800, 656], [900, 654], [1000, 649], [1100, 646], [1200, 644], [1270, 640], [1302, 642]];
      for (let i = 1; i < 275; i++) {
        const x = 14.5 + i * 4.678, k = lots.findIndex((l) => l[0] > x), [x1, y1] = lots[k - 1], [x2, y2] = lots[k];
        g += line(x.toFixed(1), (y1 + ((y2 - y1) * (x - x1)) / (x2 - x1)).toFixed(1), x.toFixed(1), 674, i % 7 < 4 ? "#35b03c" : "#8ed892");
      }
      const bal = [
        ...P(0, 476, "43,454 85,455 98,458 115,447 145,448 185,446 205,442 270,446 310,451 380,453 398,442 448,442 462,433 485,436 500,435 515,427 532,427 545,412 570,413 600,418 628,422 645,418 675,420 705,415 712,402 745,397 790,404 830,411 900,411 930,408 938,403 968,403 985,408 1040,415 1050,410 1065,392 1090,395 1135,392 1150,398 1190,399 1210,397 1235,399 1245,383 1295,380 1305,386 1333,386 1342,378 1375,379 1390,368 1445,371 1455,365 1472,335"),
        ...P(500, 476, "0,343 28,347 42,332 75,332 110,342 170,353 183,328 205,331 222,336 238,328 250,310 300,311 335,292 365,300 410,303 440,310 465,311 480,303 500,304 545,317 560,313 590,292 620,283 645,270 660,274 680,268 725,284 760,283 775,274 785,259 800,262 895,295 908,268 940,275 952,262 967,266 980,223 1008,234 1025,232 1078,253 1095,242 1130,252 1178,270 1193,250 1203,254 1217,228 1233,230 1246,201 1262,202 1290,213 1301,163 1330,168 1358,180 1372,180 1388,170"),
        ...P(970, 476, "0,178 20,187 34,176 72,194 88,187 104,190 115,175 134,179 144,124 162,133 195,133 203,130 215,132 235,124 270,133 285,127 298,133 313,127 330,130 355,115 373,115 385,122 398,118 413,123 440,115 480,134 537,152 551,113 567,117 580,111 600,112 608,119 625,119 652,133 665,134 678,142 692,130 706,136 720,109 775,138 790,132 804,136 818,72 833,80 862,58 875,62 955,113 971,99 987,106"),
      ];
      g += `<path d="${D(P(500, 476, "875,292 882,300 895,307 902,290"))}" fill="none" stroke="#9aa89a"/>`;
      g += `<path d="${D(bal)}" fill="none" stroke="#12128c" stroke-width="1.500"/>`;
      g += `<rect x="14.500" y="481.500" width="1286" height="193" fill="none" stroke="#777"/>` + line(14, 636.5, 1301, 636.5, "#666", 'stroke-width="2"');
      g += text(16, 489, `<tspan fill="#1414c8">Balance</tspan> / <tspan fill="#2fcf3a">Equity</tspan>`, 6, "#333") + text(16, 645, "Size", 6, "#333");
      [0, 5, 10, 15, 20, 24, 29, 34, 39, 43, 48, 53, 58, 62, 67, 72, 77, 81, 86, 91, 96, 100, 105, 110, 115, 119, 124, 129, 134, 138, 143, 148, 153, 157, 162, 167, 172, 176, 181, 186, 191, 196, 200, 205, 210, 215, 219, 224, 229, 234, 238, 243, 248, 253, 257, 262, 267, 272]
        .forEach((v, i) => (g += text(i ? Math.round(14.5 + i * 22.22) : 18, 682, v, 6, "#222", R)));
      document.getElementById("equity").innerHTML = g;
    </script>
  </body>
</html>
